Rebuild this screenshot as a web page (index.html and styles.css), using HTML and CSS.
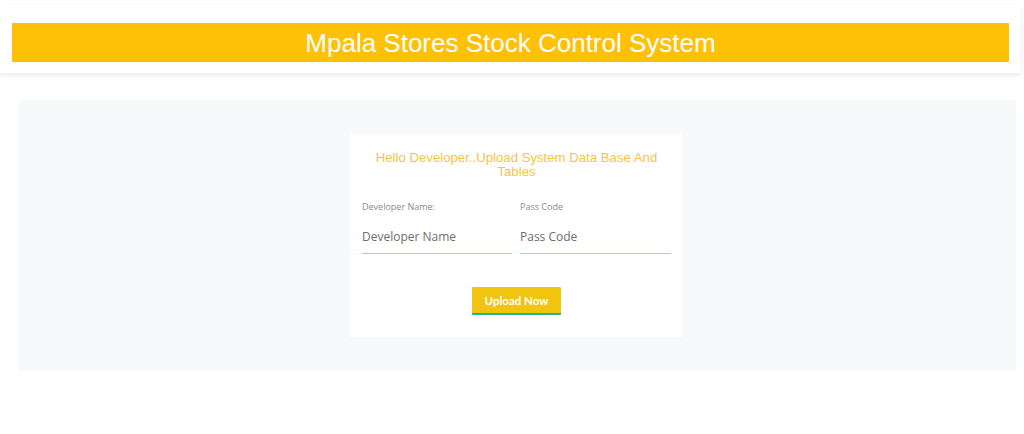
FILE: index.html
```html
<!DOCTYPE html>
<html>
<head>
<meta charset="utf-8">
<link rel="stylesheet" href="styles.css">
</head>
<body>
<header class="top">
  <h1 class="banner">Mpala Stores Stock Control System</h1>
</header>
<main class="stage">
  <form class="card">
    <h2 class="card-title">Hello Developer..Upload System Data Base And Tables</h2>
    <div class="fields">
      <div class="field">
        <label class="label">Developer Name:</label>
        <div class="input-wrap"><input class="input" type="text" placeholder="Developer Name"></div>
      </div>
      <div class="field">
        <label class="label">Pass Code</label>
        <div class="input-wrap"><input class="input" type="password" placeholder="Pass Code"></div>
      </div>
    </div>
    <div class="actions">
      <button class="btn" type="button">Upload Now</button>
    </div>
  </form>
</main>
</body>
</html>
```

FILE: styles.css
```css
* { box-sizing: border-box; }
html, body { margin: 0; padding: 0; background: #fff; }
body { font-family: "Liberation Sans", Arial, sans-serif; }

.top {
  width: 1021px;
  margin-top: 5px;
  background: #fff;
  box-shadow: 0 2px 5px rgba(0,0,0,0.09);
  padding: 18px 12px 11px 12px;
}
.banner {
  margin: 0;
  width: 997px;
  height: 39px;
  background: #ffc107;
  color: #fff;
  font-weight: normal;
  font-size: 26px;
  line-height: 40px;
  text-align: center;
}

.stage {
  margin: 27px 0 0 18px;
  width: 998px;
  background: #f8f9fa;
  padding: 34px 0 34px 0;
  display: flex;
  justify-content: center;
}
.card {
  width: 332px;
  margin-left: -2px;
  background: #fff;
  padding: 17px 11px 22px 12px;
}
.card-title {
  margin: 0;
  font-weight: normal;
  font-size: 13.2px;
  line-height: 14px;
  color: #f5c542;
  text-align: center;
}
.fields {
  display: grid;
  grid-template-columns: 150px 151px;
  column-gap: 8px;
  margin-top: 22px;
}
.field { display: flex; flex-direction: column; }
.label {
  font-family: "Open Sans", sans-serif;
  font-size: 9px;
  line-height: 12px;
  color: #8a8a8a;
}
.input-wrap {
  margin-top: 11px;
  height: 30px;
  border-bottom: 1px solid #fcc62d;
  padding-bottom: 5px;
  display: flex;
}
.input {
  flex: 1;
  min-width: 0;
  border: 0;
  outline: none;
  padding: 0;
  font-family: "Open Sans", sans-serif;
  font-size: 12px;
  color: #555;
  background: transparent;
}
.input::placeholder { color: #6c6c74; }
.actions {
  display: flex;
  justify-content: center;
  margin-top: 33px;
}
.btn {
  width: 89px;
  height: 28px;
  border: 0;
  border-bottom: 2px solid #1fb58f;
  background: #f1c40f;
  color: #fff;
  font-family: Lato, sans-serif;
  font-weight: bold;
  font-size: 11.5px;
  padding: 0;
  border-radius: 1px;
}
```
